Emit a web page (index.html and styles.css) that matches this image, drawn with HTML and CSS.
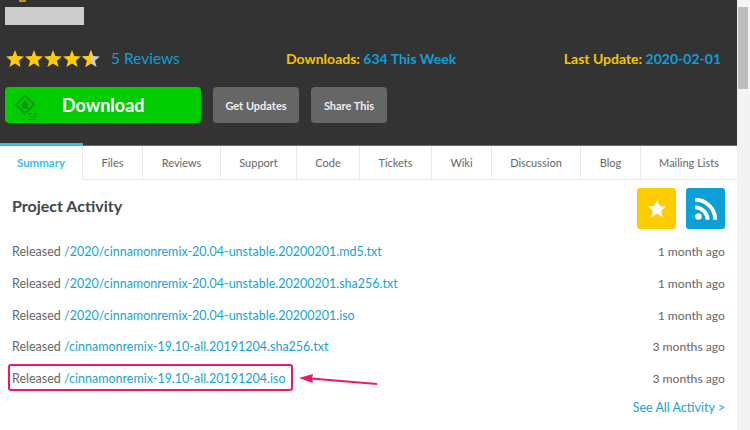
FILE: index.html
```html
<!DOCTYPE html>
<html lang="en">
<head>
    <meta charset="UTF-8">
    <title>Project Activity</title>
    <link rel="stylesheet" href="styles.css">
</head>
<body>
<div class="page">
    <div class="main">
        <header class="hero">
            <div class="hero-mark"></div>
            <div class="hero-thumb"></div>
            <div class="stats">
                <div class="rating">
                    <svg class="stars" viewBox="0 0 94 17" width="94" height="17">
                        <defs>
                            <path id="star" d="M9 0l2.300 6 6.700.5-5.100 4.200 1.700 6.300L9 13.500 3.400 17l1.700-6.300L0 6.500 6.700 6z"/>
                        </defs>
                        <use href="#star" x="0" fill="#fc0"/>
                        <use href="#star" x="19" fill="#fc0"/>
                        <use href="#star" x="38" fill="#fc0"/>
                        <use href="#star" x="57" fill="#fc0"/>
                        <use href="#star" x="76" fill="#ccc"/>
                        <path d="M85 0l-2.300 6-6.700.5 5.100 4.200-1.700 6.300 5.600-3.500z" fill="#fc0"/>
                    </svg>
                    <a class="reviews" href="#">5 Reviews</a>
                </div>
                <div class="stat">Downloads: <a href="#">634 This Week</a></div>
                <div class="stat stat-last">Last Update: <a href="#">2020-02-01</a></div>
            </div>
            <div class="actions">
                <a class="btn-download" href="#">
                    <svg class="sf-logo" viewBox="0 0 28 28" width="28" height="28">
                        <path d="M11 1.500L2 10.500l9 9 9-9z" fill="none" stroke="#0a9c0a" stroke-width="2"/>
                        <path d="M11 5.500c1 2 3.500 3.500 3.500 6a3.500 3.500 0 0 1-7 0c0-2.500 3-3.500 3.500-6z" fill="#0a9c0a"/>
                        <text x="14" y="26" class="sf-text">SF</text>
                    </svg>
                    <span>Download</span>
                </a>
                <a class="btn-gray btn-updates" href="#">Get Updates</a>
                <a class="btn-gray btn-share" href="#">Share This</a>
            </div>
        </header>

        <nav class="tabs">
            <a class="tab active tab-summary" href="#">Summary</a>
            <a class="tab tab-files" href="#">Files</a>
            <a class="tab tab-reviews" href="#">Reviews</a>
            <a class="tab tab-support" href="#">Support</a>
            <a class="tab tab-code" href="#">Code</a>
            <a class="tab tab-tickets" href="#">Tickets</a>
            <a class="tab tab-wiki" href="#">Wiki</a>
            <a class="tab tab-discussion" href="#">Discussion</a>
            <a class="tab tab-blog" href="#">Blog</a>
            <a class="tab tab-lists" href="#">Mailing Lists</a>
        </nav>

        <section class="activity">
            <div class="activity-head">
                <h2>Project Activity</h2>
                <div class="icon-btns">
                    <a class="icon-btn icon-star" href="#">
                        <svg viewBox="0 0 20 20" width="20" height="20"><path fill="#fff" d="M10 1l2.700 6 6.300.6-4.800 4.200 1.500 6.400L10 14.800l-5.700 3.400 1.500-6.400L1 7.600 7.300 7z"/></svg>
                    </a>
                    <a class="icon-btn icon-rss" href="#">
                        <svg viewBox="0 0 24 24" width="26" height="26"><circle cx="5" cy="19" r="3" fill="#fff"/><path d="M2 10.500a11.500 11.500 0 0 1 11.500 11.500M2 3.500a18.500 18.500 0 0 1 18.500 18.500" fill="none" stroke="#fff" stroke-width="3.600"/></svg>
                    </a>
                </div>
            </div>
            <ul class="rows">
                <li><span>Released <a href="#">/2020/cinnamonremix-20.04-unstable.20200201.md5.txt</a></span><time>1 month ago</time></li>
                <li><span>Released <a href="#">/2020/cinnamonremix-20.04-unstable.20200201.sha256.txt</a></span><time>1 month ago</time></li>
                <li><span>Released <a href="#">/2020/cinnamonremix-20.04-unstable.20200201.iso</a></span><time>1 month ago</time></li>
                <li><span>Released <a href="#">/cinnamonremix-19.10-all.20191204.sha256.txt</a></span><time>3 months ago</time></li>
                <li><span>Released <a href="#">/cinnamonremix-19.10-all.20191204.iso</a></span><time>3 months ago</time></li>
            </ul>
            <a class="see-all" href="#">See All Activity &gt;</a>
        </section>

        <div class="mark-box"></div>
        <svg class="mark-arrow" viewBox="0 0 80 14" width="80" height="14">
            <path d="M78 11L12 5.500" stroke="#f0185f" stroke-width="2" fill="none"/>
            <path d="M0 5l14-4-1 4.500 1 4.500z" fill="#f0185f"/>
        </svg>
    </div>
    <div class="scrollbar"><div class="scroll-thumb"></div></div>
</div>
</body>
</html>
```

FILE: styles.css
```css
html, body { margin: 0; padding: 0; }
body { font-family: Lato, "Liberation Sans", sans-serif; background: #fff; color: #555; overflow: hidden; }
a { text-decoration: none; color: #1a9fd6; }

.page { display: flex; width: 750px; height: 430px; overflow: hidden; }
.main { position: relative; width: 737px; flex: none; }
.scrollbar { flex: 1; background: #f1f3f4; padding: 7px 2px 0 1px; }
.scroll-thumb { height: 82px; background: #bdbdbd; }

.hero { height: 145px; box-sizing: border-box; background: #333; padding-top: 7px; position: relative; }
.hero-mark { position: absolute; left: 19px; top: 0; width: 7px; height: 2px; background: #d98a20; }
.hero-thumb { width: 79px; height: 18px; margin-left: 5px; background: #ccc; }

.stats { display: flex; align-items: center; height: 24px; margin-top: 21px; padding: 0 16px 0 6px; font-size: 14px; font-weight: 700; color: #f5c400; }
.stats a { font-weight: 400; color: #0d9fd8; }
.stats .stat a { font-weight: 700; }
.stat-last { margin-left: auto; }
.rating { display: flex; align-items: center; gap: 11px; width: 280px; }
.stars { display: block; }
.reviews { font-size: 15.500px; }

.actions { display: flex; gap: 12px; margin: 17px 0 0 5px; }
.btn-download { display: flex; align-items: center; width: 196px; height: 36px; box-sizing: border-box; padding: 0 0 0 9px; background: #0c0; border-radius: 4px; color: #fff; font-size: 18px; font-weight: 700; }
.btn-download span { margin-left: 20px; }
.sf-logo { display: block; margin-top: 5px; }
.sf-text { font-size: 9px; fill: #0a9c0a; font-weight: 400; }
.btn-gray { display: flex; align-items: center; justify-content: center; height: 36px; background: #666; border-radius: 4px; color: #eee; font-size: 11px; font-weight: 700; }
.btn-updates { width: 86px; }
.btn-share { width: 76px; }

.tabs { display: flex; height: 35px; box-sizing: border-box; border-top: 1px solid #666; border-bottom: 1px solid #e8e8e8; }
.tab { display: flex; align-items: center; justify-content: center; box-sizing: border-box; border-right: 1px solid #e8e8e8; font-size: 11px; color: #666; }
.tab.active { position: relative; color: #33c0f0; font-size: 11.500px; font-weight: 700; border-bottom: 1px solid #fff; margin-bottom: -1px; }
.tab.active::before { content: ""; position: absolute; left: 0; right: -1px; top: -3px; height: 3px; background: #33c0f0; }
.tab-summary { width: 83px; }
.tab-files { width: 60px; }
.tab-reviews { width: 78px; }
.tab-support { width: 76px; }
.tab-code { width: 63px; }
.tab-tickets { width: 72px; }
.tab-wiki { width: 60px; }
.tab-discussion { width: 89px; }
.tab-blog { width: 60px; }
.tab-lists { flex: 1; border-right: 0; }

.activity { padding: 8px 12px 0 12px; }
.activity-head { display: flex; justify-content: space-between; align-items: flex-start; height: 48px; }
.activity-head h2 { margin: 8px 0 0; font-size: 16px; font-weight: 700; color: #444; }
.icon-btns { display: flex; gap: 10px; }
.icon-btn { display: flex; align-items: center; justify-content: center; width: 39px; height: 41px; border-radius: 3px; }
.icon-star { background: #fc0; }
.icon-rss { background: #0d9fd8; }

.rows { list-style: none; margin: 0; padding: 0; }
.rows li { display: flex; justify-content: space-between; align-items: center; height: 31.700px; font-size: 12.500px; color: #666; }
.rows time { font-size: 12.200px; }
.see-all { display: block; margin-top: 6px; text-align: right; font-size: 12.500px; }

.mark-box { position: absolute; left: 8px; top: 364px; width: 281px; height: 23px; border: 2px solid #f0185f; border-radius: 3px; }
.mark-arrow { position: absolute; left: 299px; top: 373px; }
```
